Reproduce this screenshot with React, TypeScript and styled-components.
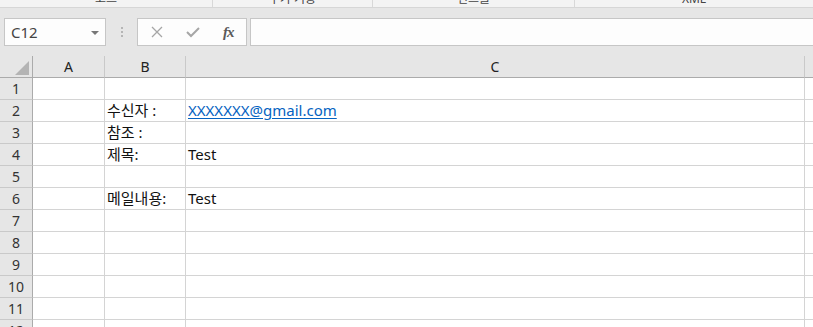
import React from 'react';
import styled, { createGlobalStyle } from 'styled-components';

const GlobalStyle = createGlobalStyle`
  html, body {
    margin: 0;
    padding: 0;
    background: #ffffff;
    overflow: hidden;
  }
  body {
    font-family: "Noto Sans", "Noto Sans CJK KR", sans-serif;
  }
`;

const groups = [
  { label: '코드', width: 213 },
  { label: '추가 기능', width: 160 },
  { label: '컨트롤', width: 202 },
  { label: 'XML', width: 238 },
];

const columns = [
  { name: 'A', width: 72 },
  { name: 'B', width: 81 },
  { name: 'C', width: 619 },
];

type Cell = { text: string; link?: boolean };
const rows: Record<number, [Cell?, Cell?, Cell?]> = {
  2: [undefined, { text: '수신자 :' }, { text: 'XXXXXXX@gmail.com', link: true }],
  3: [undefined, { text: '참조 :' }],
  4: [undefined, { text: '제목:' }, { text: 'Test' }],
  6: [undefined, { text: '메일내용:' }, { text: 'Test' }],
};

const gridCols = `33px ${columns.map((c) => c.width + 'px').join(' ')} 1fr`;

const Page = styled.div`
  width: 813px;
  height: 327px;
  overflow: hidden;
  display: flex;
  flex-direction: column;
`;

// ribbon group captions, only their lower edge shows above the formula bar
const RibbonStrip = styled.div`
  display: flex;
  height: 7px;
  background: #f3f3f3;
  border-bottom: 1px solid #d6d6d6;
  overflow: hidden;
  flex-shrink: 0;
`;

const RibbonGroup = styled.div<{ $w: number }>`
  width: ${(p) => p.$w}px;
  flex-shrink: 0;
  box-sizing: border-box;
  border-right: 1px solid #d8d8d8;
  display: flex;
  justify-content: center;
  align-items: flex-end;
  &:last-child { border-right: none; }
`;

const RibbonLabel = styled.span`
  font-size: 12px;
  line-height: 12px;
  color: #444;
  margin-bottom: 2px;
`;

const FormulaBar = styled.div`
  display: flex;
  align-items: flex-start;
  height: 48px;
  box-sizing: border-box;
  padding: 10px 0 0 4px;
  background: #e6e6e6;
  flex-shrink: 0;
`;

const NameBox = styled.div`
  width: 102px;
  height: 28px;
  box-sizing: border-box;
  border: 1px solid #c6c6c6;
  background: #fdfdfd;
  display: flex;
  align-items: center;
  justify-content: space-between;
  padding: 0 6px 0 6px;
  font-size: 15px;
  color: #444;
`;

const Caret = styled.span`
  width: 0;
  height: 0;
  border-left: 4px solid transparent;
  border-right: 4px solid transparent;
  border-top: 4px solid #777;
  margin-top: 1px;
`;

const Grip = styled.div`
  width: 31px;
  height: 28px;
  display: flex;
  flex-direction: column;
  align-items: center;
  justify-content: center;
  gap: 2px;
  span {
    width: 2px;
    height: 2px;
    background: #b5b5b5;
  }
`;

const FxButtons = styled.div`
  width: 110px;
  height: 28px;
  box-sizing: border-box;
  border: 1px solid #c6c6c6;
  background: #fdfdfd;
  display: flex;
  align-items: center;
  padding-left: 13px;
  gap: 23px;
`;

const FxLabel = styled.span`
  font-family: "Liberation Serif", serif;
  font-style: italic;
  font-weight: bold;
  font-size: 15px;
  color: #5a5a5a;
  letter-spacing: -1px;
`;

const FormulaInput = styled.div`
  flex: 1;
  height: 28px;
  margin-left: 3px;
  box-sizing: border-box;
  border: 1px solid #c6c6c6;
  border-right: none;
  background: #fdfdfd;
`;

const Grid = styled.div`
  display: grid;
  grid-template-columns: ${gridCols};
  grid-auto-rows: 22px;
  background: #e6e6e6;
`;

const Corner = styled.div`
  box-sizing: border-box;
  border-right: 1px solid #ababab;
  border-bottom: 1px solid #ababab;
  position: relative;
  &::after {
    content: "";
    position: absolute;
    right: 3px;
    bottom: 2px;
    width: 0;
    height: 0;
    border-left: 14px solid transparent;
    border-bottom: 14px solid #b4b4b4;
  }
`;

const ColHead = styled.div<{ $last?: boolean }>`
  box-sizing: border-box;
  border-right: ${(p) => (p.$last ? 'none' : '1px solid #c9c9c9')};
  border-bottom: 1px solid #ababab;
  display: flex;
  align-items: center;
  justify-content: center;
  font-size: 14px;
  color: #222;
`;

const RowHead = styled.div`
  box-sizing: border-box;
  border-right: 1px solid #ababab;
  border-bottom: 1px solid #c9c9c9;
  background: #e6e6e6;
  display: flex;
  align-items: center;
  justify-content: center;
  font-size: 14px;
  color: #333;
`;

const DataCell = styled.div<{ $link?: boolean; $edge?: boolean }>`
  box-sizing: border-box;
  background: #ffffff;
  border-right: ${(p) => (p.$edge ? 'none' : '1px solid #d4d4d4')};
  border-bottom: 1px solid #d4d4d4;
  display: flex;
  align-items: flex-end;
  padding: 0 0 1px 2px;
  font-size: 15px;
  line-height: 20px;
  white-space: nowrap;
  overflow: visible;
  color: ${(p) => (p.$link ? '#0563c1' : '#111')};
  text-decoration: ${(p) => (p.$link ? 'underline' : 'none')};
  text-underline-offset: 2px;
`;

const CrossIcon = () => (
  <svg width="12" height="12" viewBox="0 0 12 12">
    <path d="M1 1 L11 11 M11 1 L1 11" stroke="#a6a6a6" strokeWidth="1.3" fill="none" />
  </svg>
);

const CheckIcon = () => (
  <svg width="14" height="12" viewBox="0 0 14 12">
    <path d="M1 6 L5 10 L13 2" stroke="#a6a6a6" strokeWidth="2" fill="none" />
  </svg>
);

const App = () => {
  const rowNums = Array.from({ length: 12 }, (_, i) => i + 1);
  return (
    <Page>
      <GlobalStyle />
      <RibbonStrip>
        {groups.map((g) => (
          <RibbonGroup key={g.label} $w={g.width}>
            <RibbonLabel>{g.label}</RibbonLabel>
          </RibbonGroup>
        ))}
      </RibbonStrip>
      <FormulaBar>
        <NameBox>
          <span>C12</span>
          <Caret />
        </NameBox>
        <Grip>
          <span />
          <span />
          <span />
        </Grip>
        <FxButtons>
          <CrossIcon />
          <CheckIcon />
          <FxLabel>fx</FxLabel>
        </FxButtons>
        <FormulaInput />
      </FormulaBar>
      <Grid>
        <Corner />
        {columns.map((c) => (
          <ColHead key={c.name}>{c.name}</ColHead>
        ))}
        <ColHead $last />
        {rowNums.map((n) => {
          const r = rows[n] || [];
          return (
            <React.Fragment key={n}>
              <RowHead>{n}</RowHead>
              {columns.map((c, i) => {
                const cell = r[i];
                return (
                  <DataCell key={c.name} $link={cell?.link}>
                    {cell?.text}
                  </DataCell>
                );
              })}
              <DataCell $edge />
            </React.Fragment>
          );
        })}
      </Grid>
    </Page>
  );
};

export default App;
